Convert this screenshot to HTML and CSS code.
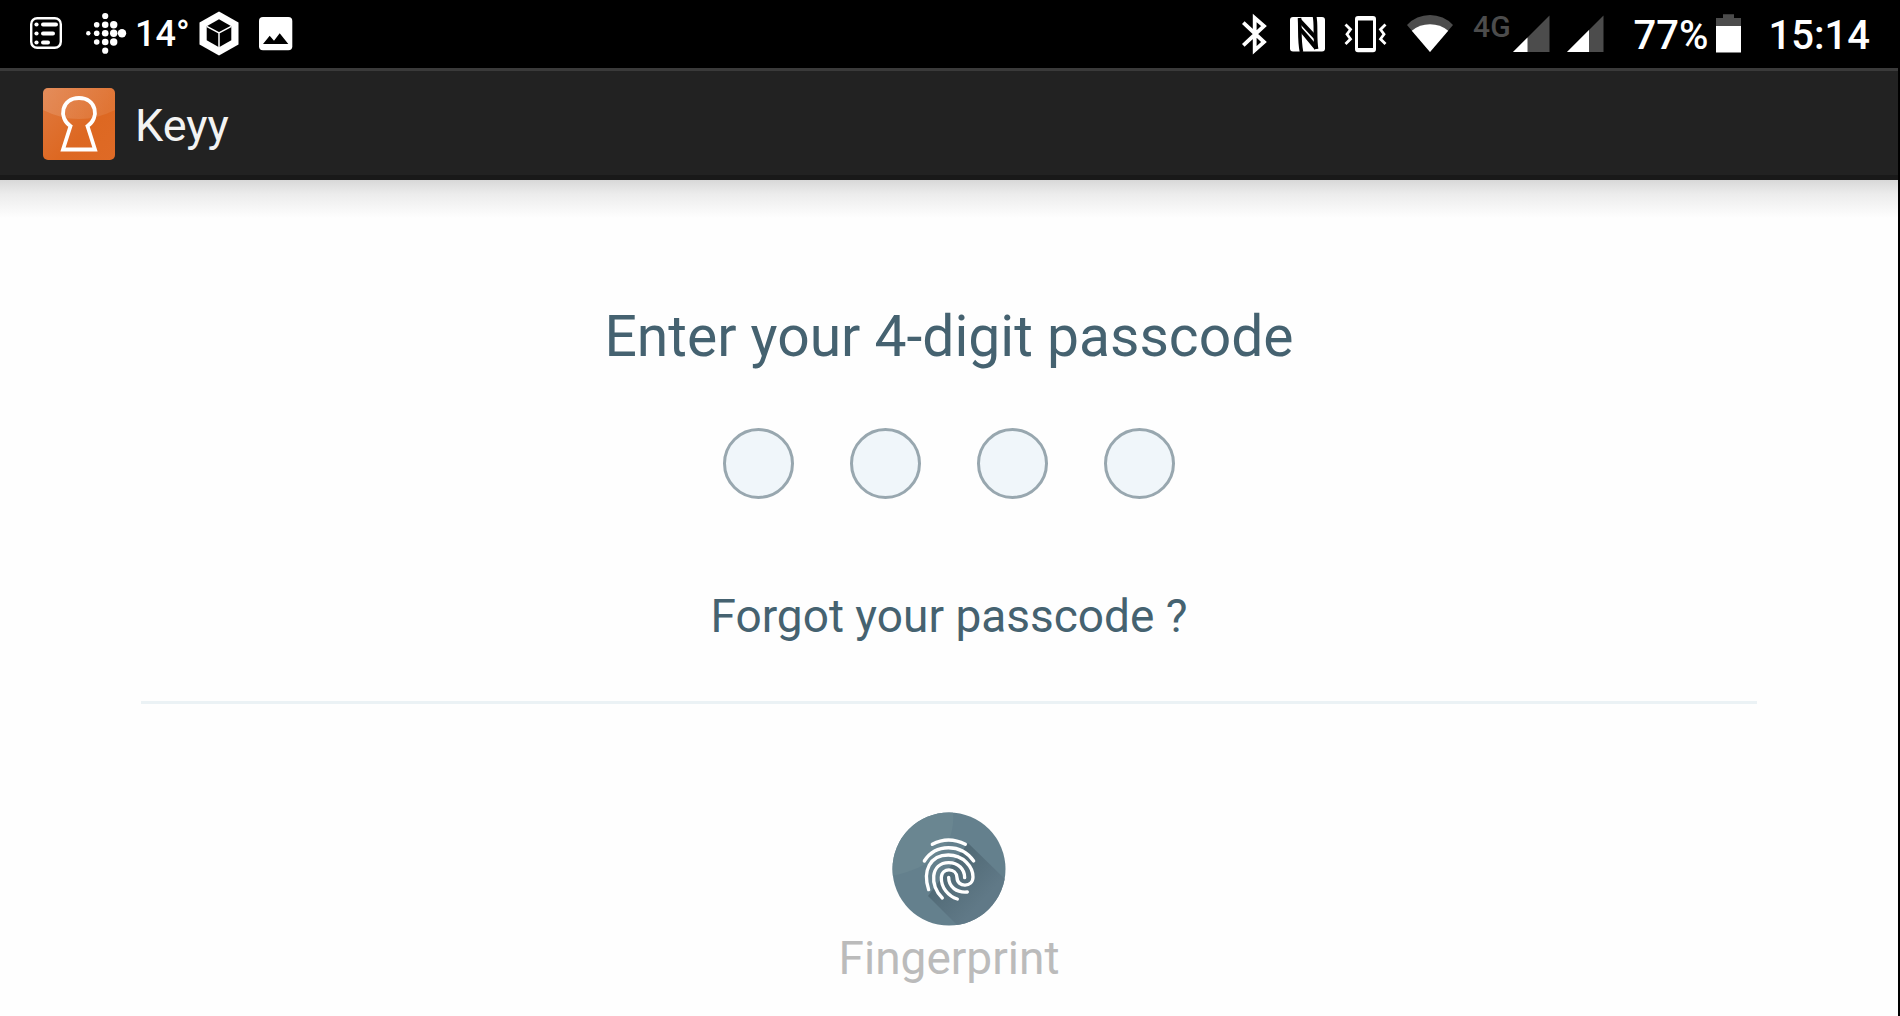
FILE: index.html
```
<!DOCTYPE html>
<html lang="en">
<head>
    <meta charset="UTF-8">
    <meta name="viewport" content="width=device-width, initial-scale=1.0">
    <title>Keyy</title>
    <link rel="stylesheet" href="styles.css">
</head>
<body>
    <div class="status-bar">
        <div class="notifications">
            <svg width="36" height="44" viewBox="0 0 36 44">
                <rect x="1.2" y="6.2" width="29.6" height="29.6" rx="6" fill="none" stroke="#fff" stroke-width="2.4"/>
                <g fill="#fff">
                    <circle cx="6.5" cy="12.5" r="2.1"/>
                    <circle cx="6.5" cy="21.5" r="2.1"/>
                    <circle cx="6.5" cy="30.5" r="2.1"/>
                    <rect x="11" y="10.5" width="17" height="4" rx="2"/>
                    <rect x="11" y="19.5" width="14" height="4" rx="2"/>
                    <rect x="11" y="28.5" width="9" height="4" rx="2"/>
                </g>
            </svg>
            <div class="weather">
                <svg width="40" height="44" viewBox="0 0 40 44" fill="#fff">
                    <circle cx="2.3" cy="21.3" r="2.2"/>
                    <circle cx="10.7" cy="12.7" r="2.8"/>
                    <circle cx="10.7" cy="21.3" r="2.8"/>
                    <circle cx="10.7" cy="30" r="2.8"/>
                    <circle cx="19.2" cy="4" r="3.1"/>
                    <circle cx="19.2" cy="12.7" r="3.3"/>
                    <circle cx="19.2" cy="21.3" r="3.3"/>
                    <circle cx="19.2" cy="30" r="3.3"/>
                    <circle cx="19.2" cy="38.7" r="3.1"/>
                    <circle cx="27.7" cy="12.7" r="3.7"/>
                    <circle cx="27.7" cy="21.3" r="3.7"/>
                    <circle cx="27.7" cy="30" r="3.7"/>
                    <circle cx="36" cy="21.3" r="4.2"/>
                </svg>
                <span class="temperature">14°</span>
                <svg width="40" height="44" viewBox="0 0 40 44">
                    <path d="M20 -.5 39.5 10.5v22L20 43.5.5 32.5v-22z" fill="#fff"/>
                    <path d="M20 7.3 32.3 14.3v14L20 35.3 7.7 28.3v-14z" fill="#000"/>
                    <path d="M7.7 14.3 20 20.8l12.3-6.5M20 20.8v15" fill="none" stroke="#fff" stroke-width="1.5"/>
                </svg>
            </div>
            <svg width="34" height="44" viewBox="0 0 34 44">
                <rect x="0" y="5" width="33.3" height="33.3" rx="4" fill="#fff"/>
                <path d="M4 32l6.7-8.3 4.3 5 5.7-7.4L29.3 32z" fill="#000"/>
            </svg>
        </div>

        <div class="system">
            <svg width="31" height="44" viewBox="0 0 31 44">
                <path d="M1.3 10.7 22 30 12.7 38.3V6L22 14 1.3 33.3" fill="none" stroke="#fff" stroke-width="3.8"/>
            </svg>
            <svg width="37" height="44" viewBox="0 0 37 44">
                <rect x="0" y="5" width="35" height="34.4" rx="3" fill="#fff"/>
                <path d="M9.5 6C10.3 16 9 28 11.5 40" fill="none" stroke="#000" stroke-width="3.6"/>
                <path d="M24.5 4c2 8 0 22 2 33" fill="none" stroke="#000" stroke-width="3.8"/>
                <path d="M8 6h2L25 22v6L11 13zM11 15l14 16v7L11 21z" fill="#000"/>
            </svg>
            <svg width="46" height="44" viewBox="0 0 46 44">
                <path d="M14 4h15q3 0 3 3v30.3q0 3-3 3H14q-3 0-3-3V7q0-3 3-3zm0 4.500V36h15V8.500z" fill="#fff" fill-rule="evenodd"/>
                <path d="M1.5 12.500 6.5 17.500 3 22.200 6.5 27 1.5 32M41.5 12.500 36.5 17.500 40 22.200 36.5 27 41.5 32" fill="none" stroke="#fff" stroke-width="2.8"/>
            </svg>
            <svg width="49" height="44" viewBox="0 0 49 44">
                <path d="M0 13A31.5 31.5 0 0 1 46 13L23 40z" fill="#4c4c4c"/>
                <path d="M4.8 18.7A29 29 0 0 1 41.2 18.7L23 40z" fill="#fff"/>
            </svg>
            <div class="mobile">
                <span class="network">4G</span>
                <svg width="37" height="44" viewBox="0 0 37 44">
                    <path d="M0 40 36.5 3.5V40z" fill="#4c4c4c"/>
                    <path d="M0 40 14.5 25.5V40z" fill="#fff"/>
                </svg>
            </div>
            <svg width="37" height="44" viewBox="0 0 37 44">
                <path d="M0 40 36.5 3.5V40z" fill="#4c4c4c"/>
                <path d="M0 40 22 18v22z" fill="#fff"/>
            </svg>
            <div class="battery">
                <span>77%</span>
                <svg width="25" height="44" viewBox="0 0 25 44">
                    <path d="M0 6h7V2.3h11V6h7v10H0z" fill="#4c4c4c"/>
                    <path d="M0 14h25v26.5H0z" fill="#fff"/>
                </svg>
            </div>
            <span class="clock">15:14</span>
        </div>
    </div>

    <div class="screen">
        <header class="app-bar">
            <svg width="72" height="72" viewBox="0 0 72 72">
                <defs>
                    <linearGradient id="logo" x1="0" y1="0" x2="1" y2="1">
                        <stop offset="0" stop-color="#e07a40"/>
                        <stop offset=".6" stop-color="#dd6822"/>
                        <stop offset="1" stop-color="#df6a26"/>
                    </linearGradient>
                    <linearGradient id="gloss" x1="0" y1="0" x2="1" y2="0">
                        <stop offset="0" stop-color="#fff" stop-opacity=".14"/>
                        <stop offset="1" stop-color="#fff" stop-opacity=".08"/>
                    </linearGradient>
                </defs>
                <rect width="72" height="72" rx="5" fill="url(#logo)"/>
                <path d="M0 22V5q0-5 5-5h62q5 0 5 5v17q-36 18-72 0z" fill="url(#gloss)"/>
                <path d="M27.5 38C15 30 18.5 10 36 10s21 20 8.5 28L52 61.5H20z" fill="none" stroke="#fff" stroke-width="3.8"/>
            </svg>
            <h1>Keyy</h1>
        </header>

        <main>
            <h2>Enter your 4-digit passcode</h2>
            <form class="passcode">
                <input type="password" maxlength="1" inputmode="numeric" aria-label="Digit 1">
                <input type="password" maxlength="1" inputmode="numeric" aria-label="Digit 2">
                <input type="password" maxlength="1" inputmode="numeric" aria-label="Digit 3">
                <input type="password" maxlength="1" inputmode="numeric" aria-label="Digit 4">
            </form>
            <a class="forgot" href="#">Forgot your passcode ?</a>
            <hr>
            <button class="fingerprint" type="button">
                <svg width="114" height="114" viewBox="0 0 114 114">
                    <defs>
                        <clipPath id="disc"><circle cx="57" cy="57" r="56.5"/></clipPath>
                        <linearGradient id="shade" x1="0" y1="0" x2="1" y2="1">
                            <stop offset=".3" stop-color="#516a76"/>
                            <stop offset=".7" stop-color="#607987"/>
                        </linearGradient>
                    </defs>
                    <g clip-path="url(#disc)">
                        <rect width="114" height="114" fill="#64808d"/>
                        <path d="M0 0h61q4 50-61 64z" fill="#6a8691"/>
                        <path d="M76 31 114 68v46H66L36 84z" fill="url(#shade)"/>
                    </g>
                    <g transform="translate(23 19) scale(.3333)" fill="none" stroke="#fff" stroke-width="10" stroke-linecap="round">
                        <path d="M52 40Q100 14 151 40"/>
                        <path d="M28 90C62 37 138 37 176 90"/>
                        <path d="M41 176C22 120 45 72 100 72C145 72 174 108 174 138C174 169 127 171 126 140C125 110 80 108 79 140C78 170 100 196 127 204"/>
                        <path d="M82 201C43 165 46 95 101 95C130 95 149 115 149 140"/>
                        <path d="M101 139C101 168 125 186 157 183"/>
                    </g>
                </svg>
                <span>Fingerprint</span>
            </button>
        </main>
    </div>
</body>
</html>
```
FILE: styles.css
```
body {
    font-family: Roboto, sans-serif;
    margin: 0;
    min-height: 100vh;
    display: flex;
    flex-direction: column;
    background-color: #000;
    color: #456270;
}
svg {
    display: block;
    flex: none;
    overflow: visible;
}
.status-bar {
    display: flex;
    justify-content: space-between;
    align-items: center;
    height: 68px;
    padding: 0 30px;
    color: #fff;
    font-size: 40px;
    font-weight: 500;
}
.notifications,
.weather,
.system,
.mobile,
.battery {
    display: flex;
    align-items: center;
}
.notifications {
    gap: 20px;
}
.system {
    gap: 17px;
}
.weather {
    gap: 9px;
}
.temperature {
    font-size: 36px;
}
.mobile {
    gap: 2px;
}
.network {
    align-self: flex-start;
    font-size: 30px;
    line-height: 30px;
    color: #4c4c4c;
}
.battery {
    gap: 7px;
    margin: 0 11px 0 13px;
}
.clock,
.battery span {
    padding-top: 2px;
}
.screen {
    flex: 1;
    display: flex;
    flex-direction: column;
    margin-right: 2px;
    background-color: #fefefe;
}
.app-bar {
    display: flex;
    align-items: center;
    gap: 20px;
    box-sizing: border-box;
    height: 112px;
    padding: 2px 43px 0;
    background-color: #222;
    border-top: 3px solid #3a3a3a;
    border-bottom: 5px solid #191919;
    color: #f3f3f3;
}
.app-bar h1 {
    margin: 0;
    padding-top: 2px;
    font-size: 45px;
    font-weight: 400;
}
main {
    flex: 1;
    display: flex;
    flex-direction: column;
    align-items: center;
    padding: 124px 141px 16px;
    background: linear-gradient(#d8d8d8, #ececec 14px, #fefefe 38px) no-repeat;
}
h2 {
    margin: 0;
    font-size: 57px;
    font-weight: 400;
    line-height: 66px;
}
.passcode {
    display: flex;
    gap: 56px;
    margin: 58px 0 90px;
}
.passcode input {
    box-sizing: border-box;
    width: 71px;
    height: 71px;
    padding: 0;
    border: 3px solid #98a7af;
    border-radius: 50%;
    background-color: #f0f6fa;
    color: #456270;
    font-size: 46px;
    text-align: center;
}
.forgot {
    color: inherit;
    font-size: 46px;
    line-height: 54px;
    text-decoration: none;
}
hr {
    align-self: stretch;
    height: 3px;
    margin: 58px 0 108px;
    border: none;
    background-color: #ebf2f5;
}
.fingerprint {
    display: flex;
    flex-direction: column;
    align-items: center;
    gap: 5px;
    padding: 0;
    border: none;
    background: none;
    color: #bbb;
    font-family: inherit;
    font-size: 46px;
    line-height: 54px;
    cursor: pointer;
}
```
